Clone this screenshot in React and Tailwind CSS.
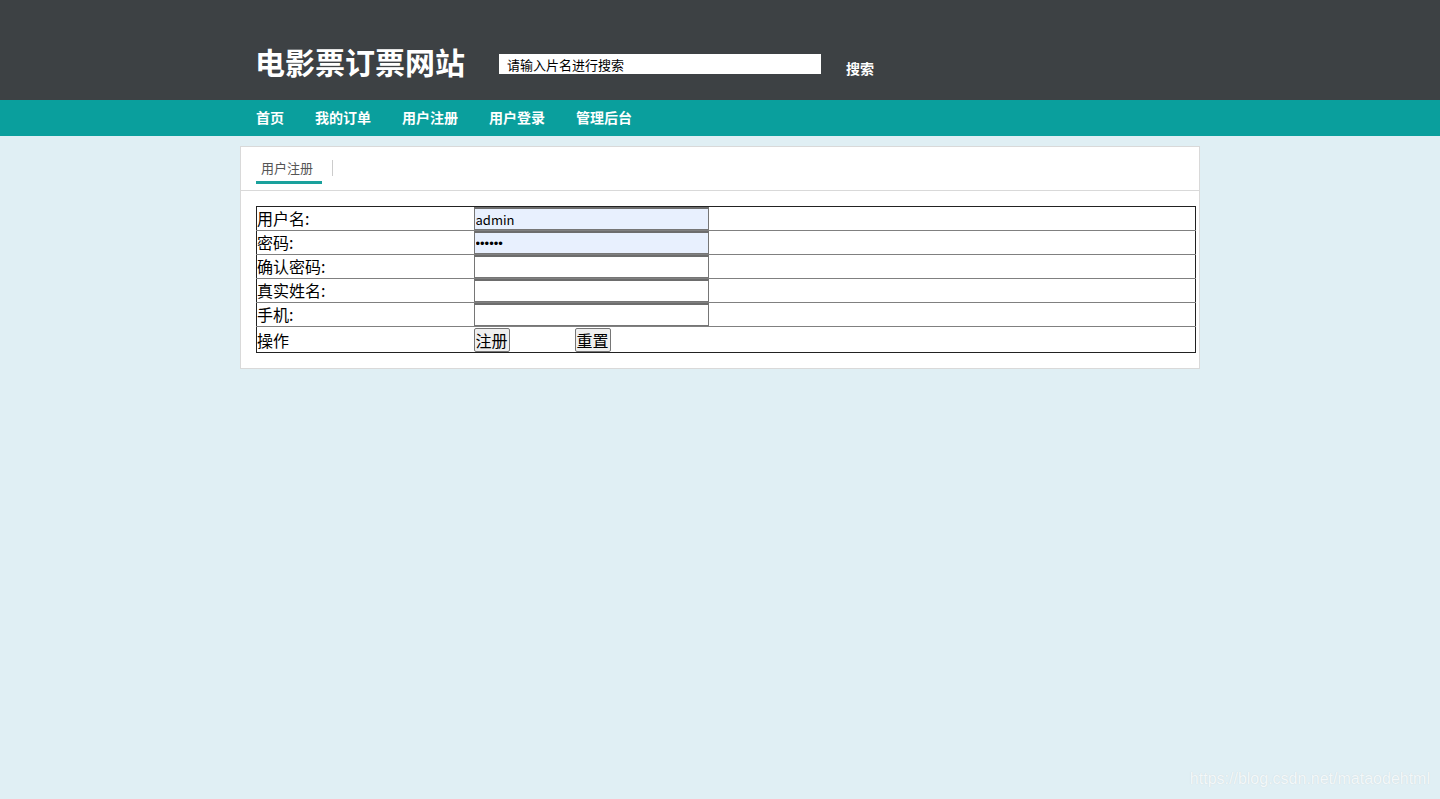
import React from "react";

const rows = [
  { label: "用户名:", value: "admin", type: "text", filled: true },
  { label: "密码:", value: "123456", type: "password", filled: true },
  { label: "确认密码:", value: "", type: "password" },
  { label: "真实姓名:", value: "", type: "text" },
  { label: "手机:", value: "", type: "text" },
];

const navItems = ["首页", "我的订单", "用户注册", "用户登录", "管理后台"];

export default function App() {
  return (
    <div
      className="relative min-h-[799px] bg-[#e0eff4] text-black"
      style={{ fontFamily: '"Noto Sans CJK SC", "Noto Sans", sans-serif' }}
    >
      <header className="h-[100px] bg-[#3d4144]">
        <div className="w-[960px] mx-auto h-full flex items-center pt-[22px] pl-[15px]">
          <h1 className="text-[30px] font-bold text-white leading-none">电影票订票网站</h1>
          <input
            className="ml-[34px] mt-[6px] w-[322px] h-[20px] bg-white px-2 text-[13px] text-black outline-none placeholder:text-black"
            placeholder="请输入片名进行搜索"
          />
          <span className="ml-[25px] mt-[14px] text-[14px] font-bold text-white">搜索</span>
        </div>
      </header>

      <nav className="h-[36px] bg-[#0a9f9d]">
        <ul className="w-[960px] mx-auto h-full flex items-center gap-[31px] px-4 pb-[2px]">
          {navItems.map((item) => (
            <li key={item} className="text-[14px] font-bold text-white">
              {item}
            </li>
          ))}
        </ul>
      </nav>

      <div className="w-[960px] mx-auto mt-[10px] bg-white border border-[#d9d9d9]">
        <div className="h-[44px] border-b border-[#d9d9d9] flex items-end px-[15px]">
          <div className="h-[30px] w-[66px] border-b-[3px] border-[#1aa19c] flex items-center pl-[5px] text-[13px] text-[#555] mb-[6px]">
            用户注册
          </div>
          <div className="w-px h-[16px] bg-[#ccc] ml-[10px] mb-[14px]" />
        </div>

        <div className="pt-[15px] pb-[15px] pl-[15px]">
          <table className="w-[940px] border-collapse border border-[#222] text-[16px]">
            <tbody>
              {rows.map((r, i) => (
                <tr key={r.label} className={i > 0 ? "border-t border-[#808080]" : ""}>
                  <td className="w-[217px] h-[23px] p-0 leading-[23px] align-middle">{r.label}</td>
                  <td className="p-0 align-middle">
                    <input
                      type={r.type}
                      defaultValue={r.value}
                      style={r.type === "password" ? { fontFamily: '"Liberation Sans", Arial, sans-serif' } : undefined}
                      className={`block w-[235px] h-[23px] border border-[#767676] border-t-2 border-t-[#6d6d6d] px-px text-[13px] outline-none ${
                        r.filled ? "bg-[#e8f0fe]" : "bg-white"
                      }`}
                    />
                  </td>
                </tr>
              ))}
              <tr className="border-t border-[#808080]">
                <td className="w-[217px] h-[26px] p-0 align-middle">操作</td>
                <td className="p-0 align-middle">
                  <div className="flex items-center">
                    <button className="h-[24px] px-px bg-[#efefef] border border-[#767676] rounded-[2px] text-[16px] leading-none">
                      注册
                    </button>
                    <button className="ml-[65px] h-[24px] px-px bg-[#efefef] border border-[#767676] rounded-[2px] text-[16px] leading-none">
                      重置
                    </button>
                  </div>
                </td>
              </tr>
            </tbody>
          </table>
        </div>
      </div>

      <div
        className="absolute right-[10px] bottom-[8px] text-[16px] text-[#f3f8fa] [text-shadow:0_0_1px_#c9d3d6]"
        style={{ fontFamily: '"Liberation Sans", Arial, sans-serif' }}
      >
        https://blog.csdn.net/mataodehtml
      </div>
    </div>
  );
}
